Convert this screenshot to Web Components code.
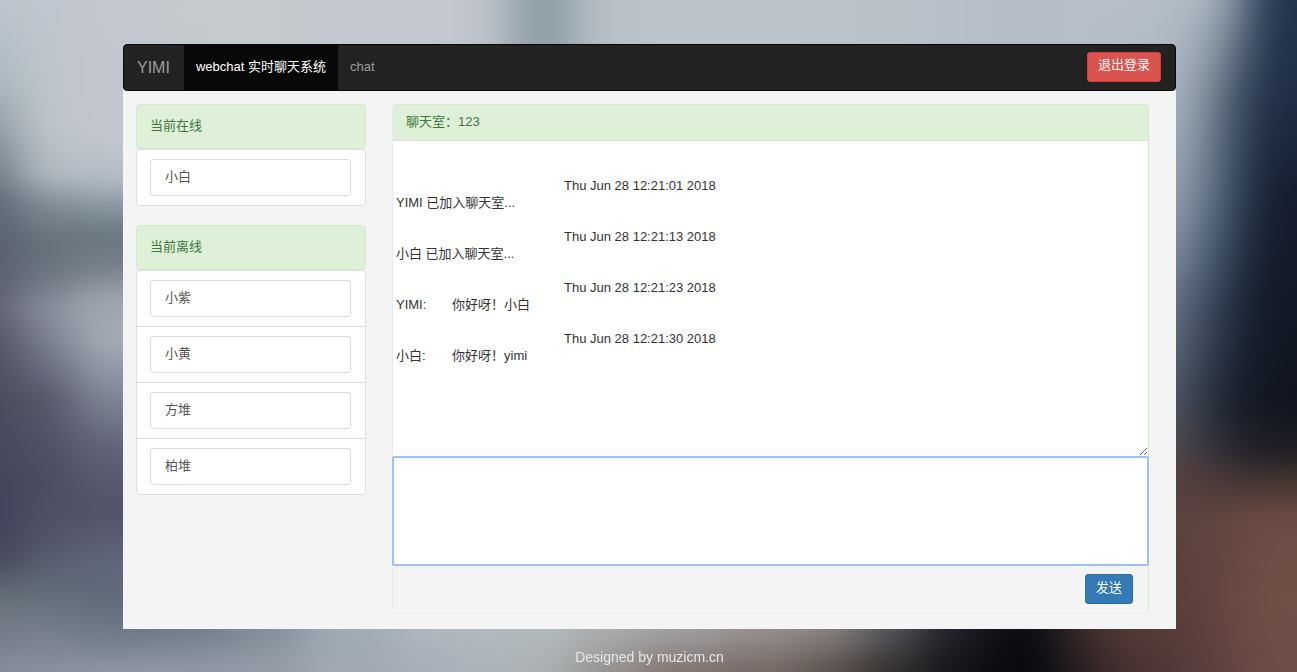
<!DOCTYPE html>
<html lang="zh-CN">
<head>
<meta charset="utf-8">
<title>webchat</title>
<style>
html, body { margin: 0; min-height: 100%; }
body { font: 13px/18px "Liberation Sans", "Noto Sans CJK SC", sans-serif; color: #333; background: #8b929c; }
</style>
</head>
<body>
<chat-app></chat-app>
<script>
const define = (name, html, setup) => {
  const t = document.createElement('template');
  t.innerHTML = html;
  customElements.define(name, class extends HTMLElement {
    constructor() {
      super();
      this.attachShadow({ mode: 'open' }).append(t.content.cloneNode(true));
    }
    connectedCallback() { if (setup) setup(this, this.shadowRoot); }
  });
};

// Soft out-of-focus backdrop: vertical colour ramps, blended sideways.
// Each strip: start x, end x, then "y colour" stops.
const strips = [
  [-120, 20, '0 #bcc5cd,80 #a9b8bf,130 #8c9aa2,200 #5d6a76,250 #575e6c,310 #5e5f73,350 #504f62,440 #47485b,520 #40415a,560 #454858,600 #66707a,672 #868c9b'],
  [20, 75, '0 #c0c6cf,130 #bfc5cc,175 #b0bac1,205 #7f8c96,240 #66727c,275 #6c7681,310 #8a8f9d,350 #747a8b,400 #565669,480 #4b4c60,540 #52546a,600 #65717c,672 #8b909e'],
  [75, 160, '0 #c3c7cf,140 #c2c6cf,180 #b2bbc4,205 #8a98a3,235 #687680,265 #757f89,300 #a0a5b0,340 #a4acb6,400 #7e8494,450 #5f6278,510 #525168,560 #5f667a,600 #606c7b,640 #747e8b,672 #9096a5'],
  [160, 230, '0 #c5cacd,140 #c2c8cd,180 #b2bbc4,205 #8a98a3,235 #687680,265 #757f89,300 #a0a5b0,340 #a4acb6,400 #8e94a4,450 #6f7288,510 #626178,560 #5f667a,630 #737e8a,672 #9299a6'],
  [230, 300, '0 #c5cacd,300 #c5cacd,630 #818d97,672 #969ca9'],
  [300, 390, '0 #c4c8d0,300 #c4c8d0,630 #a0abb4,672 #a0a8b3'],
  [390, 460, '0 #c4c8d0,300 #c4c8d0,630 #aeb6be,672 #a6afb9'],
  [460, 510, '0 #c0c5cd,300 #c0c5cd,630 #b3babf,672 #acb3bb'],
  [510, 575, '0 #8c9da6,44 #8c9da6,300 #b9c1c9,630 #b3babd,672 #aab0b3'],
  [575, 640, '0 #b9c1c8,300 #b9c1c8,630 #aaadb0,672 #95928f'],
  [640, 720, '0 #bbc3cb,300 #bbc3cb,630 #a09fa2,672 #82746f'],
  [720, 800, '0 #bbc3cb,300 #bbc3cb,630 #97908f,672 #756965'],
  [800, 860, '0 #bac3ca,300 #bac3ca,630 #88817f,672 #5b504c'],
  [860, 920, '0 #b9c2c9,300 #b9c2c9,630 #54545a,672 #352f2e'],
  [920, 980, '0 #b7c0ca,300 #b7c0ca,630 #202329,672 #15161a'],
  [980, 1060, '0 #b5bec7,300 #b5bec7,630 #0b0d13,672 #08090e'],
  [1060, 1110, '0 #b6bfc9,300 #b6bfc9,630 #3c2c2b,672 #2b2123'],
  [1110, 1165, '0 #b6bfc9,100 #adb7c2,200 #a0aaba,300 #7c899b,400 #656c79,450 #5a5358,480 #55413f,630 #563b38,672 #4a3331'],
  [1165, 1200, '0 #b1bcc6,100 #a5b1bd,200 #8b97a7,250 #77859a,300 #5c697c,400 #454c59,450 #4a4348,480 #55413f,520 #5d4441,600 #5b403d,672 #533a38'],
  [1200, 1228, '0 #a7b3be,100 #6c7b89,200 #566a7e,300 #344459,400 #232a38,450 #30303a,480 #4a3638,520 #60453f,600 #62433f,672 #5d4140'],
  [1228, 1252, '0 #77869a,100 #3c4d62,200 #2d4055,300 #1b2939,400 #161c2b,450 #25242c,480 #46363a,520 #66483f,600 #6b4a42,672 #664541'],
  [1252, 1420, '0 #22334b,100 #1f2e45,200 #151d2f,300 #121826,400 #10151f,450 #1e1d24,480 #44332f,520 #6c4c44,600 #704f47,672 #6f4d47'],
];
define('blurred-backdrop', `
<style>
:host { position: fixed; inset: 0; z-index: -1; overflow: hidden; display: block; }
svg { display: block; width: 100%; height: 100%; }
</style>
<svg viewBox="0 0 1297 672" preserveAspectRatio="none" aria-hidden="true">
  <defs>
    <filter id="soft" filterUnits="userSpaceOnUse" x="-120" y="-60" width="1540" height="792" color-interpolation-filters="sRGB"><feGaussianBlur stdDeviation="22 8"/></filter>
    ${strips.map((s, i) => `<linearGradient id="g${i}" gradientUnits="userSpaceOnUse" x1="0" y1="0" x2="0" y2="672">${
      s[2].split(',').map(p => { const [y, c] = p.split(' '); return `<stop offset="${y / 672}" stop-color="${c}"/>`; }).join('')
    }</linearGradient>`).join('')}
  </defs>
  <g filter="url(#soft)">${strips.map((s, i) => `<rect x="${s[0]}" y="-60" width="${s[1] - s[0]}" height="792" fill="url(#g${i})"/>`).join('')}</g>
</svg>`);

define('chat-button', `
<style>
:host { display: inline-block; --fill: #337ab7; --edge: #2e6da4; }
:host([tone="danger"]) { --fill: #d9534f; --edge: #d43f3a; }
button { display: block; height: 30px; padding: 0 10px 3px; border: 1px solid var(--edge); border-radius: 3px; background: var(--fill); color: #fff; font: inherit; cursor: pointer; }
</style>
<button type="button"><slot></slot></button>`);

define('nav-bar', `
<style>
:host { display: block; }
nav { display: flex; align-items: stretch; height: 45px; background: #222; border: 1px solid #080808; border-radius: 4px; }
a { display: flex; align-items: center; padding: 0 12px 2px; color: #9d9d9d; text-decoration: none; }
a.brand { padding: 0 14px 0 13px; font-size: 16px; }
a.active { background: #080808; color: #fff; }
.end { display: flex; align-items: center; margin-left: auto; padding: 0 14px 2px; }
</style>
<nav>
  <a class="brand" href="#">YIMI</a>
  <a class="active" href="#webchat" aria-current="page">webchat 实时聊天系统</a>
  <a href="#chat">chat</a>
  <div class="end"><slot></slot></div>
</nav>`);

define('user-item', `
<style>
:host { display: block; padding: 9px 14px 9px 13px; border-top: 1px solid #ddd; }
:host(:first-child) { border-top: 0; }
a { display: block; padding: 8px 14px 9px; border: 1px solid #ddd; border-radius: 3px; color: #555; text-decoration: none; }
</style>
<a href="#"><slot></slot></a>`);

define('user-group', `
<style>
:host { display: block; }
h2 { margin: 0; padding: 12px 13px 13px; border: 1px solid #d6e9c6; border-radius: 4px; background: #dff0d8; color: #3c763d; font: inherit; }
.list { background: #fff; border: 1px solid #ddd; border-radius: 4px; }
</style>
<section><h2></h2><div class="list"><slot></slot></div></section>`,
(el, root) => { root.querySelector('h2').textContent = el.getAttribute('heading'); });

define('chat-room', `
<style>
:host { display: block; }
section { border: 1px solid #ebebeb; border-top-color: #d6e9c6; border-right-color: #d6e9c6; border-radius: 4px; }
h2 { margin: 0; padding: 8px 13px 9px; border-bottom: 1px solid #d6e9c6; border-radius: 3px 3px 0 0; background: #dff0d8; color: #3c763d; font: inherit; }
textarea { display: block; box-sizing: border-box; width: 100%; margin: 0; border: 0; padding: 2px 3px; background: #fff; color: #333; font: inherit; line-height: 17px; outline: 0; }
.log { height: 315px; tab-size: 28px; }
.compose { margin: 0 -1px; width: calc(100% + 2px); height: 110px; border: 2px solid #9dc0fa; border-radius: 2px; resize: none; }
.foot { display: flex; justify-content: flex-end; padding: 8px 15px 9px; }
</style>
<section>
  <h2>聊天室：123</h2>
  <textarea class="log" aria-label="聊天记录" readonly>


						Thu Jun 28 12:21:01 2018
YIMI 已加入聊天室...

						Thu Jun 28 12:21:13 2018
小白 已加入聊天室...

						Thu Jun 28 12:21:23 2018
YIMI:	你好呀！小白

						Thu Jun 28 12:21:30 2018
小白:	你好呀！yimi</textarea>
  <textarea class="compose" aria-label="消息"></textarea>
  <div class="foot"><chat-button>发送</chat-button></div>
</section>`);

define('chat-app', `
<style>
:host { display: flex; flex-direction: column; box-sizing: border-box; min-height: 100vh; padding: 44px 121px 0 123px; }
main { background: #f4f4f4; border-radius: 4px 4px 0 0; }
.columns { display: grid; grid-template-columns: 230fr 757fr; gap: 26px; padding: 13px 27px 15px 13px; align-items: start; }
aside { display: flex; flex-direction: column; gap: 19px; }
footer { padding: 19px 0 6px; text-align: center; font-size: 14px; color: #e8e8e8; }
</style>
<blurred-backdrop></blurred-backdrop>
<main>
  <nav-bar><chat-button tone="danger">退出登录</chat-button></nav-bar>
  <div class="columns">
    <aside>
      <user-group heading="当前在线"><user-item>小白</user-item></user-group>
      <user-group heading="当前离线">
        <user-item>小紫</user-item><user-item>小黄</user-item><user-item>方堆</user-item><user-item>柏堆</user-item>
      </user-group>
    </aside>
    <chat-room></chat-room>
  </div>
</main>
<footer>Designed by muzicm.cn</footer>`);
</script>
</body>
</html>
